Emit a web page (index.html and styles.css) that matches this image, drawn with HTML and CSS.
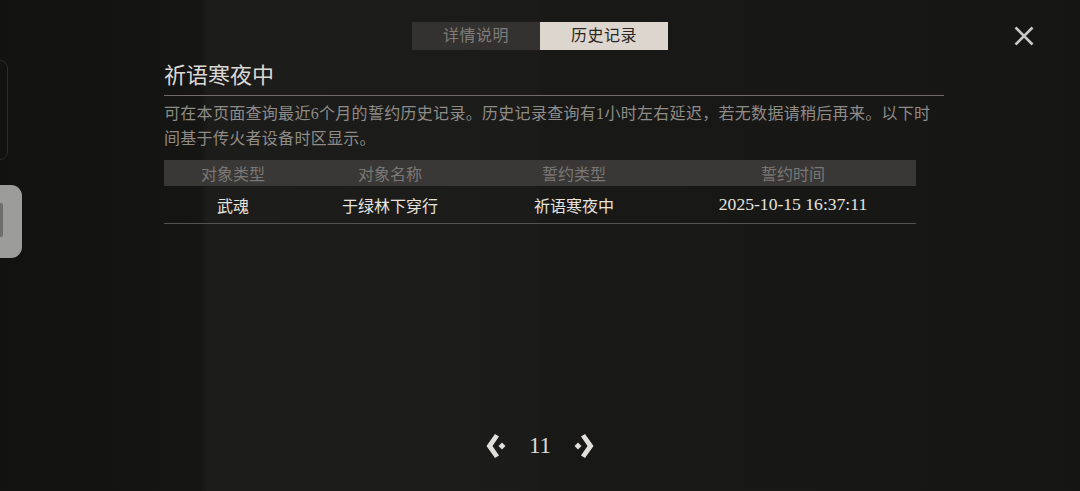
FILE: index.html
```html
<!DOCTYPE html>
<html lang="zh-CN">
<head>
<meta charset="utf-8">
<title>历史记录</title>
<link rel="stylesheet" href="styles.css">
</head>
<body>
<div class="page">
  <div class="edge-dark"></div>
  <div class="edge-knob"><span class="knob-notch"></span></div>
  <button class="close" aria-label="关闭">
    <svg width="20" height="20" viewBox="0 0 20 20"><path d="M1.5 1.5 L18.5 18.5 M18.5 1.5 L1.5 18.5" stroke="#c9c9c7" stroke-width="2.6" fill="none"/></svg>
  </button>

  <div class="tabs">
    <div class="tab">详情说明</div>
    <div class="tab active">历史记录</div>
  </div>

  <div class="content">
    <h1 class="title">祈语寒夜中</h1>
    <p class="desc">可在本页面查询最近6个月的誓约历史记录。历史记录查询有1小时左右延迟，若无数据请稍后再来。以下时间基于传火者设备时区显示。</p>
    <div class="table">
      <div class="row head">
        <div class="cell c1">对象类型</div>
        <div class="cell c2">对象名称</div>
        <div class="cell c3">誓约类型</div>
        <div class="cell c4">誓约时间</div>
      </div>
      <div class="row body">
        <div class="cell c1">武魂</div>
        <div class="cell c2">于绿林下穿行</div>
        <div class="cell c3">祈语寒夜中</div>
        <div class="cell c4 time">2025-10-15 16:37:11</div>
      </div>
    </div>
  </div>

  <div class="pager">
    <svg class="arrow" width="21" height="26" viewBox="0 0 21 26"><polygon points="10,1 14,3.5 7.5,13 14,22.5 10,25 1.5,13" fill="#e2dfda"/><polygon points="17,9.5 20.5,13 17,16.5 13.5,13" fill="#e2dfda"/></svg>
    <span class="num">11</span>
    <svg class="arrow flip" width="21" height="26" viewBox="0 0 21 26"><polygon points="10,1 14,3.5 7.5,13 14,22.5 10,25 1.5,13" fill="#e2dfda"/><polygon points="17,9.5 20.5,13 17,16.5 13.5,13" fill="#e2dfda"/></svg>
  </div>
</div>
</body>
</html>
```

FILE: styles.css
```css
* { box-sizing: border-box; }
html, body { margin: 0; padding: 0; }
body {
  background: #141413;
  font-family: "Liberation Serif", "Noto Sans CJK SC", serif;
}
.page {
  position: relative;
  width: 1080px;
  height: 491px;
  overflow: hidden;
  display: flex;
  flex-direction: column;
  background: linear-gradient(90deg,
    #121210 0px, #151513 200px, #1c1c1b 208px, #1b1b1a 536px,
    #181817 544px, #171716 900px, #151514 1080px);
}
.edge-dark {
  position: absolute;
  left: -14px;
  top: 60px;
  width: 22px;
  height: 100px;
  border: 1px solid #2c2c29;
  border-radius: 8px;
  background: #121210;
}
.edge-knob {
  position: absolute;
  left: -12px;
  top: 185px;
  width: 34px;
  height: 73px;
  border-radius: 11px;
  background: #9c9c9a;
}
.knob-notch {
  position: absolute;
  left: 10px;
  top: 18px;
  width: 5px;
  height: 34px;
  border-radius: 2px;
  background: #6e6e6c;
}
.close {
  position: absolute;
  left: 1014px;
  top: 26px;
  width: 20px;
  height: 20px;
  padding: 0;
  border: 0;
  background: none;
  display: flex;
}
.tabs {
  display: flex;
  justify-content: center;
  padding-top: 22px;
}
.tab {
  width: 128px;
  height: 28px;
  line-height: 28px;
  text-align: center;
  font-size: 16px;
  background: #333230;
  color: #7f7c79;
  letter-spacing: 0.5px;
}
.tab.active {
  background: #ddd6ce;
  color: #2b2623;
}
.content {
  margin-left: 164px;
  width: 780px;
}
.title {
  margin: 11px 0 0;
  font-size: 22px;
  font-weight: normal;
  line-height: 30px;
  color: #dcd9d4;
  padding-bottom: 4px;
  border-bottom: 1.5px solid #706b66;
}
.desc {
  margin: 5px 0 0;
  font-size: 16px;
  line-height: 25px;
  color: #8f8c88;
  letter-spacing: 0.3px;
}
.table {
  margin-top: 9px;
  width: 752px;
}
.row {
  display: flex;
  align-items: center;
}
.row.head {
  height: 26px;
  background: #393837;
  color: #7a7774;
  font-size: 16px;
}
.row.body {
  height: 38px;
  color: #e6e3de;
  font-size: 16px;
  border-bottom: 1px solid #55524f;
}
.cell { text-align: center; }
.c1 { width: 138px; }
.c2 { width: 176px; }
.c3 { width: 192px; }
.c4 { width: 246px; }
.time { font-size: 17.6px; }
.pager {
  margin-top: auto;
  margin-bottom: 30px;
  display: flex;
  justify-content: center;
  align-items: center;
  gap: 23px;
  height: 30px;
}
.num {
  font-size: 23px;
  color: #dedbd6;
  line-height: 30px;
}
.arrow { display: block; }
.arrow.flip { transform: scaleX(-1); }
```
